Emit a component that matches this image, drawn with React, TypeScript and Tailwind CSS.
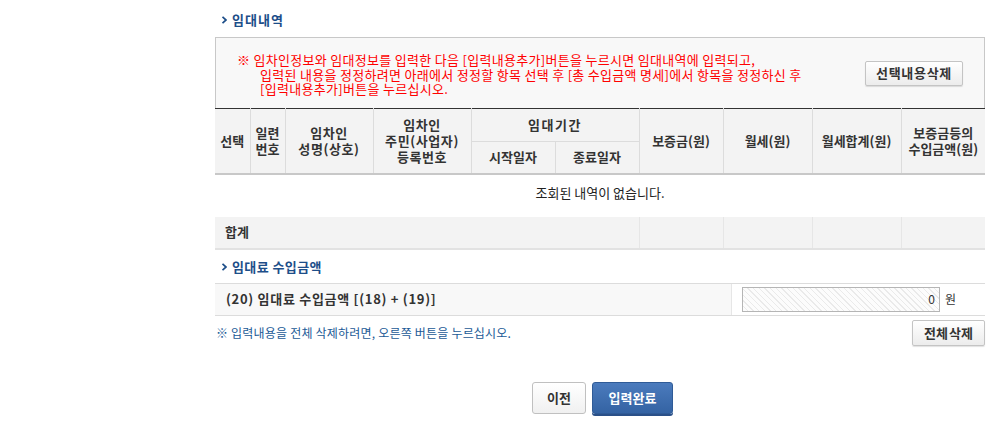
const font = "font-['Noto_Sans_CJK_KR',sans-serif]"

const thCls = "border-r border-[#dcdcdc] font-bold text-[#333] text-[13px] leading-[16px] text-center align-middle"

function SectionTitle({ children, wide }: { children: string; wide?: boolean }) {
  return (
    <div className="flex items-center h-[20px] pl-[7px] text-[#1d4e89] font-bold text-[13px]">
      <svg width="5" height="8" viewBox="0 0 5 8" className="mr-[5px]">
        <path d="M0.5 0.8 L4 4 L0.5 7.2" fill="none" stroke="#1d4e89" strokeWidth="1.8" />
      </svg>
      <span className={wide ? "tracking-[1px]" : "tracking-[0.4px]"}>{children}</span>
    </div>
  )
}

export default function App() {
  return (
    <div className={`w-[998px] h-[429px] bg-white ${font} text-[12px] text-[#333]`}>
      <div className="ml-[215px] w-[770px] pt-[10px]">
        <SectionTitle wide>임대내역</SectionTitle>

        {/* 안내 박스 */}
        <div className="mt-[7px] h-[71px] border-t border-x border-[#c8c8c8] bg-[#f8f8f8] flex items-center justify-between pl-[21px] pr-[21px]">
          <div className="text-[#ff0000] text-[13px] leading-[14.5px] tracking-[0.3px] pt-[4px]">
            <p>※ 임차인정보와 임대정보를 입력한 다음 [입력내용추가]버튼을 누르시면 임대내역에 입력되고,</p>
            <p className="pl-[23px]">입력된 내용을 정정하려면 아래에서 정정할 항목 선택 후 [총 수입금액 명세]에서 항목을 정정하신 후</p>
            <p className="pl-[23px]">[입력내용추가]버튼을 누르십시오.</p>
          </div>
          <button className="w-[98px] h-[25px] border border-[#c4c4c4] rounded-[2px] bg-gradient-to-b from-white to-[#ececec] font-bold text-[13px] tracking-[0.7px] text-[#333] shadow-[0_1px_1px_rgba(0,0,0,0.12)]">
            선택내용삭제
          </button>
        </div>

        <table className="w-[770px] border-collapse table-fixed border-t border-[#333]">
          <colgroup>
            <col className="w-[35px]" />
            <col className="w-[35px]" />
            <col className="w-[88px]" />
            <col className="w-[98px]" />
            <col className="w-[84px]" />
            <col className="w-[84px]" />
            <col className="w-[84px]" />
            <col className="w-[89px]" />
            <col className="w-[89px]" />
            <col className="w-[84px]" />
          </colgroup>
          <thead className="bg-[#f3f3f3] border-b-2 border-[#c8c8c8]">
            <tr className="h-[33px]">
              <th rowSpan={2} className={thCls}>선택</th>
              <th rowSpan={2} className={thCls}>일련<br />번호</th>
              <th rowSpan={2} className={`${thCls} tracking-[0.6px]`}>임차인<br />성명(상호)</th>
              <th rowSpan={2} className={`${thCls} tracking-[0.6px]`}>임차인<br />주민(사업자)<br />등록번호</th>
              <th colSpan={2} className={`${thCls} border-b border-[#cfcfcf] tracking-[1.5px]`}>임대기간</th>
              <th rowSpan={2} className={thCls}>보증금(원)</th>
              <th rowSpan={2} className={thCls}>월세(원)</th>
              <th rowSpan={2} className={thCls}>월세합계(원)</th>
              <th rowSpan={2} className={`${thCls} border-r-0`}>보증금등의<br />수입금액(원)</th>
            </tr>
            <tr className="h-[32px]">
              <th className={thCls}>시작일자</th>
              <th className={thCls}>종료일자</th>
            </tr>
          </thead>
          <tbody>
            <tr className="h-[43px]">
              <td colSpan={10} className="text-center text-[13px] text-[#222] pb-[6px]">
                조회된 내역이 없습니다.
              </td>
            </tr>
            <tr className="h-[32px] bg-[#f3f3f3] border-b-2 border-[#e2e2e2]">
              <td colSpan={6} className="pl-[10px] font-bold text-[13px] text-[#333] border-r border-[#e6e6e6]">합계</td>
              <td className="border-r border-[#e6e6e6]"></td>
              <td className="border-r border-[#e6e6e6]"></td>
              <td className="border-r border-[#e6e6e6]"></td>
              <td></td>
            </tr>
          </tbody>
        </table>

        <div className="mt-[7px]">
          <SectionTitle>임대료 수입금액</SectionTitle>
        </div>

        <div className="mt-[6px] flex h-[33px] border-y border-[#dcdcdc]">
          <div className="w-[517px] bg-[#f8f8f8] border-r border-[#e6e6e6] flex items-center pl-[11px] font-bold text-[#333] text-[13px] tracking-[0.7px]">
            (20) 임대료 수입금액 [(18) + (19)]
          </div>
          <div className="flex items-center pl-[10px]">
            <div className="w-[198px] h-[25px] border border-[#b5b5b5] bg-[repeating-linear-gradient(45deg,#fcfcfc_0px,#fcfcfc_3px,#eaeaea_3px,#eaeaea_4px)] flex items-center justify-end pr-[4px] text-[12px] text-[#333]">
              0
            </div>
            <span className="ml-[5px] text-[12px]">원</span>
          </div>
        </div>

        <div className="mt-[4px] flex items-center justify-between">
          <p className="text-[#1a5a96] text-[12px] tracking-[0.2px] pl-[1px]">※ 입력내용을 전체 삭제하려면, 오른쪽 버튼을 누르십시오.</p>
          <button className="w-[73px] h-[26px] border border-[#c4c4c4] rounded-[2px] bg-gradient-to-b from-white to-[#ececec] font-bold text-[13px] text-[#333] [word-spacing:-2px] shadow-[0_1px_1px_rgba(0,0,0,0.12)]">
            전체 삭제
          </button>
        </div>

        <div className="mt-[36px] flex justify-center gap-[6px] pl-[5px]">
          <button className="w-[54px] h-[32px] border border-[#c0c0c0] rounded-[3px] bg-gradient-to-b from-white to-[#f0f0f0] font-bold text-[13px] text-[#333]">
            이전
          </button>
          <button className="w-[81px] h-[32px] border border-[#2f5b97] rounded-[3px] bg-gradient-to-b from-[#4b7bbd] to-[#3463a3] font-bold text-[13px] text-white shadow-[0_2px_0_#2a5088]">
            입력완료
          </button>
        </div>
      </div>
    </div>
  )
}
